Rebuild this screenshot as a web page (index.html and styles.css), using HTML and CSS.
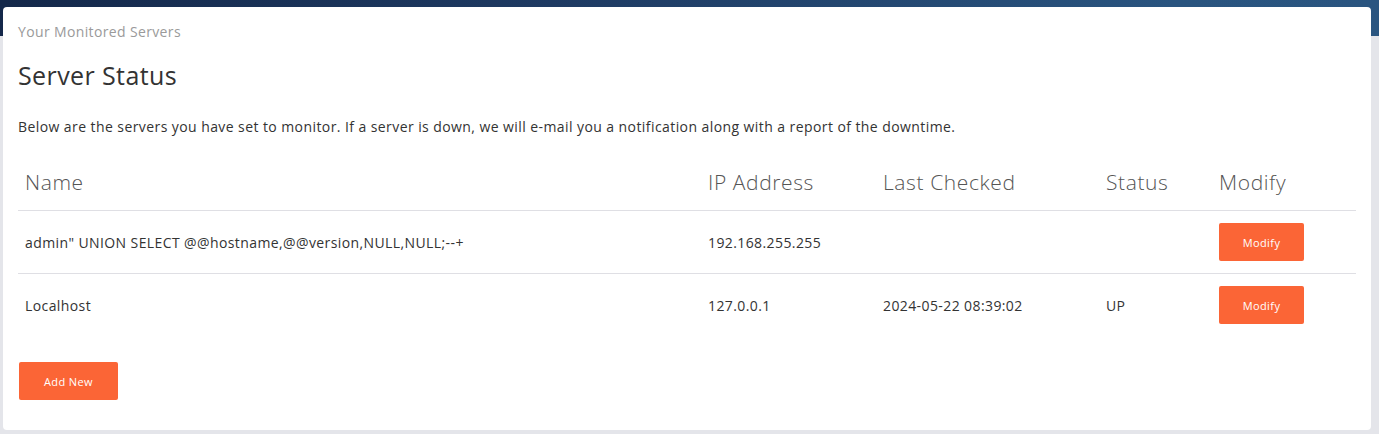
FILE: index.html
```html
<!DOCTYPE html>
<html>
<head>
<meta charset="utf-8">
<link rel="stylesheet" href="styles.css">
</head>
<body>
<div class="topband"></div>
<div class="page">
  <div class="card">
    <div class="crumb">Your Monitored Servers</div>
    <h1 class="title">Server Status</h1>
    <p class="intro">Below are the servers you have set to monitor. If a server is down, we will e-mail you a notification along with a report of the downtime.</p>
    <table class="servers">
      <colgroup>
        <col class="c-name"><col class="c-ip"><col class="c-last"><col class="c-status"><col class="c-mod">
      </colgroup>
      <thead>
        <tr><th>Name</th><th>IP Address</th><th>Last Checked</th><th>Status</th><th>Modify</th></tr>
      </thead>
      <tbody>
        <tr><td>admin" UNION SELECT @@hostname,@@version,NULL,NULL;--+</td><td>192.168.255.255</td><td></td><td></td><td><button class="btn btn-mod">Modify</button></td></tr>
        <tr class="last"><td>Localhost</td><td>127.0.0.1</td><td>2024-05-22 08:39:02</td><td>UP</td><td><button class="btn btn-mod">Modify</button></td></tr>
      </tbody>
    </table>
    <button class="btn btn-add">Add New</button>
  </div>
</div>
</body>
</html>
```
FILE: styles.css
```css
html, body { margin: 0; padding: 0; }
body {
  background: #e4e5ea;
  font-family: "Open Sans", "DejaVu Sans", sans-serif;
  color: #333;
  position: relative;
  height: 434px;
  overflow: hidden;
}
.topband {
  position: absolute;
  left: 0; top: 0; right: 0;
  height: 36px;
  background: linear-gradient(90deg, #14284a 0%, #1e3a62 40%, #29547f 85%, #2a5580 100%);
}
.page {
  position: relative;
  padding: 7px 8px 0 3px;
}
.card {
  background: #fff;
  border-radius: 4px;
  padding: 15px 15px 30px 15px;
}
.crumb {
  font-size: 14px;
  color: #9a9a9a;
  line-height: 20px;
  letter-spacing: 0.36px;
}
.title {
  margin: 19px 0 0 0;
  font-size: 25px;
  font-weight: 400;
  line-height: 28px;
  color: #333;
  letter-spacing: 0.4px;
}
.intro {
  margin: 28px 0 0 0;
  font-size: 14px;
  line-height: 20px;
  color: #333;
  letter-spacing: 0.42px;
}
.servers {
  margin-top: 18px;
  width: 1338px;
  border-collapse: collapse;
  table-layout: fixed;
}
.c-name { width: 683px; }
.c-ip { width: 175px; }
.c-last { width: 223px; }
.c-status { width: 113px; }
.c-mod { width: 144px; }
.servers th {
  text-align: left;
  font-weight: 300;
  font-size: 21px;
  letter-spacing: 0.6px;
  color: #555;
  padding: 0 7px 2px 7px;
  height: 53px;
  border-bottom: 1px solid #dfdfe4;
}
.servers td {
  font-size: 14px;
  letter-spacing: 0.4px;
  color: #333;
  padding: 0 7px;
  height: 62px;
  border-bottom: 1px solid #dfdfe4;
}
.servers tr.last td { border-bottom: none; }
.btn {
  background: #fb6536;
  color: #fff;
  border: none;
  border-radius: 2px;
  font-family: inherit;
  font-size: 11px;
  letter-spacing: 0.4px;
  height: 38px;
  cursor: pointer;
}
.btn-mod { width: 85px; }
.btn-add { width: 99px; margin: 26px 0 0 1px; display: block; }
```
